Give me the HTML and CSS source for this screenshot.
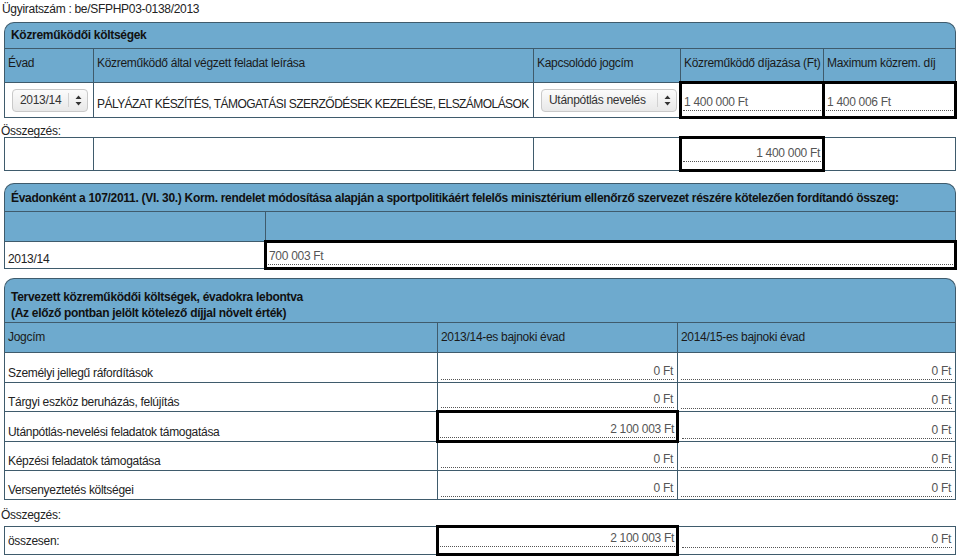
FILE: index.html
```html
<!DOCTYPE html>
<html lang="hu">
<head>
    <meta charset="UTF-8">
    <title>Közreműködői költségek</title>
    <link rel="stylesheet" href="styles.css">
</head>
<body>

<div class="doc-number">Ügyiratszám : be/SFPHP03-0138/2013</div>

<div class="section section-costs">
    <div class="panel-title">Közreműködői költségek</div>
    <table class="grid">
        <colgroup>
            <col style="width: 89px">
            <col style="width: 440px">
            <col style="width: 147px">
            <col style="width: 143px">
            <col style="width: 132px">
        </colgroup>
        <tr class="head-row">
            <th>Évad</th>
            <th>Közreműködő által végzett feladat leírása</th>
            <th>Kapcsolódó jogcím</th>
            <th>Közreműködő díjazása (Ft)</th>
            <th>Maximum közrem. díj</th>
        </tr>
        <tr class="data-row">
            <td class="middle">
                <div class="fake-select season-select"><span class="text">2013/14</span><span class="arrows"><svg width="7" height="11" viewBox="0 0 7 11"><path d="M3.5 0.5 L6.5 4 L0.5 4 Z M3.5 10.5 L6.5 7 L0.5 7 Z" fill="#333"/></svg></span></div>
            </td>
            <td class="desc">PÁLYÁZAT KÉSZÍTÉS, TÁMOGATÁSI SZERZŐDÉSEK KEZELÉSE, ELSZÁMOLÁSOK</td>
            <td class="middle">
                <div class="fake-select title-select"><span class="text">Utánpótlás nevelés</span><span class="arrows"><svg width="7" height="11" viewBox="0 0 7 11"><path d="M3.5 0.5 L6.5 4 L0.5 4 Z M3.5 10.5 L6.5 7 L0.5 7 Z" fill="#333"/></svg></span></div>
            </td>
            <td class="hl"><div class="amount left">1 400 000 Ft</div></td>
            <td class="hl"><div class="amount left">1 400 006 Ft</div></td>
        </tr>
    </table>
    <div class="sum-caption">Összegzés:</div>
    <table class="grid">
        <colgroup>
            <col style="width: 89px">
            <col style="width: 440px">
            <col style="width: 147px">
            <col style="width: 143px">
            <col style="width: 132px">
        </colgroup>
        <tr class="sum-row">
            <td></td>
            <td></td>
            <td></td>
            <td class="hl"><div class="amount">1 400 000 Ft</div></td>
            <td></td>
        </tr>
    </table>
</div>

<div class="section section-mandatory">
    <div class="panel-title">Évadonként a 107/2011. (VI. 30.) Korm. rendelet módosítása alapján a sportpolitikáért felelős minisztérium ellenőrző szervezet részére kötelezően fordítandó összeg:</div>
    <table class="grid">
        <colgroup>
            <col style="width: 261px">
            <col style="width: 690px">
        </colgroup>
        <tr class="head-row">
            <th></th>
            <th></th>
        </tr>
        <tr class="data-row">
            <td>2013/14</td>
            <td class="hl"><div class="amount left">700 003 Ft</div></td>
        </tr>
    </table>
</div>

<div class="section section-planned">
    <div class="panel-title">Tervezett közreműködői költségek, évadokra lebontva<br>(Az előző pontban jelölt kötelező díjjal növelt érték)</div>
    <table class="grid">
        <colgroup>
            <col style="width: 433px">
            <col style="width: 240px">
            <col style="width: 278px">
        </colgroup>
        <tr class="head-row">
            <th>Jogcím</th>
            <th>2013/14-es bajnoki évad</th>
            <th>2014/15-es bajnoki évad</th>
        </tr>
        <tr class="data-row">
            <td>Személyi jellegű ráfordítások</td>
            <td><div class="amount">0 Ft</div></td>
            <td><div class="amount">0 Ft</div></td>
        </tr>
        <tr class="data-row short">
            <td>Tárgyi eszköz beruházás, felújítás</td>
            <td><div class="amount">0 Ft</div></td>
            <td><div class="amount">0 Ft</div></td>
        </tr>
        <tr class="data-row">
            <td>Utánpótlás-nevelési feladatok támogatása</td>
            <td class="hl"><div class="amount">2 100 003 Ft</div></td>
            <td><div class="amount">0 Ft</div></td>
        </tr>
        <tr class="data-row short">
            <td>Képzési feladatok támogatása</td>
            <td><div class="amount">0 Ft</div></td>
            <td><div class="amount">0 Ft</div></td>
        </tr>
        <tr class="data-row short">
            <td>Versenyeztetés költségei</td>
            <td><div class="amount">0 Ft</div></td>
            <td><div class="amount">0 Ft</div></td>
        </tr>
    </table>
    <div class="sum-caption tall">Összegzés:</div>
    <table class="grid">
        <colgroup>
            <col style="width: 433px">
            <col style="width: 240px">
            <col style="width: 278px">
        </colgroup>
        <tr class="data-row total">
            <td>összesen:</td>
            <td class="hl"><div class="amount">2 100 003 Ft</div></td>
            <td><div class="amount">0 Ft</div></td>
        </tr>
    </table>
</div>

</body>
</html>
```

FILE: styles.css
```css
body {
    margin: 0;
    padding: 0;
    font-family: "Liberation Sans", Arial, sans-serif;
    font-size: 12px;
    letter-spacing: -0.3px;
    color: #222;
    background-color: #fff;
}

.doc-number {
    padding: 2px 2px 0;
    height: 22px;
    box-sizing: border-box;
    line-height: 14px;
}

.section {
    margin: 0 3px 0 4px;
}

.panel-title {
    box-sizing: border-box;
    height: 26px;
    padding: 5px 6px 0;
    line-height: 15px;
    font-weight: bold;
    color: #111;
    background-color: #6eaace;
    border: 1px solid #3f5b6c;
    border-bottom: none;
    border-radius: 10px 10px 0 0;
}

.section-mandatory {
    margin-top: 11px;
}

.section-mandatory .panel-title {
    height: 28px;
    padding-top: 7px;
}

.section-planned {
    margin-top: 8px;
}

.section-planned .panel-title {
    height: 44px;
    padding-top: 10px;
    line-height: 16px;
}

.grid {
    width: 100%;
    border-collapse: collapse;
    table-layout: fixed;
    border: 1px solid #3f5b6c;
}

.grid th,
.grid td {
    box-sizing: border-box;
    padding: 0 3px;
    border: 1px solid #3f5b6c;
    font-weight: normal;
    text-align: left;
    white-space: nowrap;
    overflow: hidden;
}

.head-row th {
    height: 34px;
    vertical-align: top;
    padding-top: 7px;
    color: #1a1a1a;
    background-color: #6eaace;
}

.section-mandatory .head-row th {
    height: 30px;
}

.section-planned .head-row th {
    height: 30px;
}

.data-row td {
    height: 35px;
    background-color: #fff;
    vertical-align: bottom;
    padding-bottom: 5px;
}

.section-mandatory .data-row td {
    height: 27px;
    padding-bottom: 2px;
}

.section-planned .data-row td {
    height: 30px;
    padding-bottom: 2px;
}

.section-planned .data-row.short td {
    height: 29px;
}

.section-planned .data-row.total td {
    height: 28px;
    padding-bottom: 6px;
}

.data-row td.middle {
    vertical-align: middle;
    padding: 0 0 0 7px;
}

.data-row td.desc {
    padding-bottom: 6px;
    letter-spacing: -0.55px;
}

.sum-caption {
    height: 17px;
    line-height: 15px;
    padding-top: 5px;
    box-sizing: border-box;
    margin-left: -3px;
}

.sum-caption.tall {
    height: 25px;
    padding-top: 8px;
}

.sum-row td {
    height: 33px;
    background-color: #fff;
    vertical-align: bottom;
    padding-bottom: 7px;
}

.grid td.hl {
    border: 3px solid #000;
    padding-left: 1px;
    padding-right: 1px;
}

.amount {
    color: #555;
    text-align: right;
    line-height: 14px;
    padding: 0 1px 1px;
    border-bottom: 1px dotted #555;
}

.amount.left {
    text-align: left;
}

.fake-select {
    display: flex;
    align-items: center;
    height: 23px;
    box-sizing: border-box;
    border: 1px solid #c9c9c9;
    border-radius: 4px;
    background: linear-gradient(#fbfbfb, #e8e8e8);
    color: #333;
}

.fake-select .text {
    flex: 1;
    padding-left: 7px;
}

.fake-select .arrows {
    display: flex;
    align-items: center;
    justify-content: center;
    width: 18px;
    height: 14px;
    border-left: 1px solid #d2d2d2;
}

.season-select {
    width: 76px;
}

.title-select {
    width: 136px;
}
```
